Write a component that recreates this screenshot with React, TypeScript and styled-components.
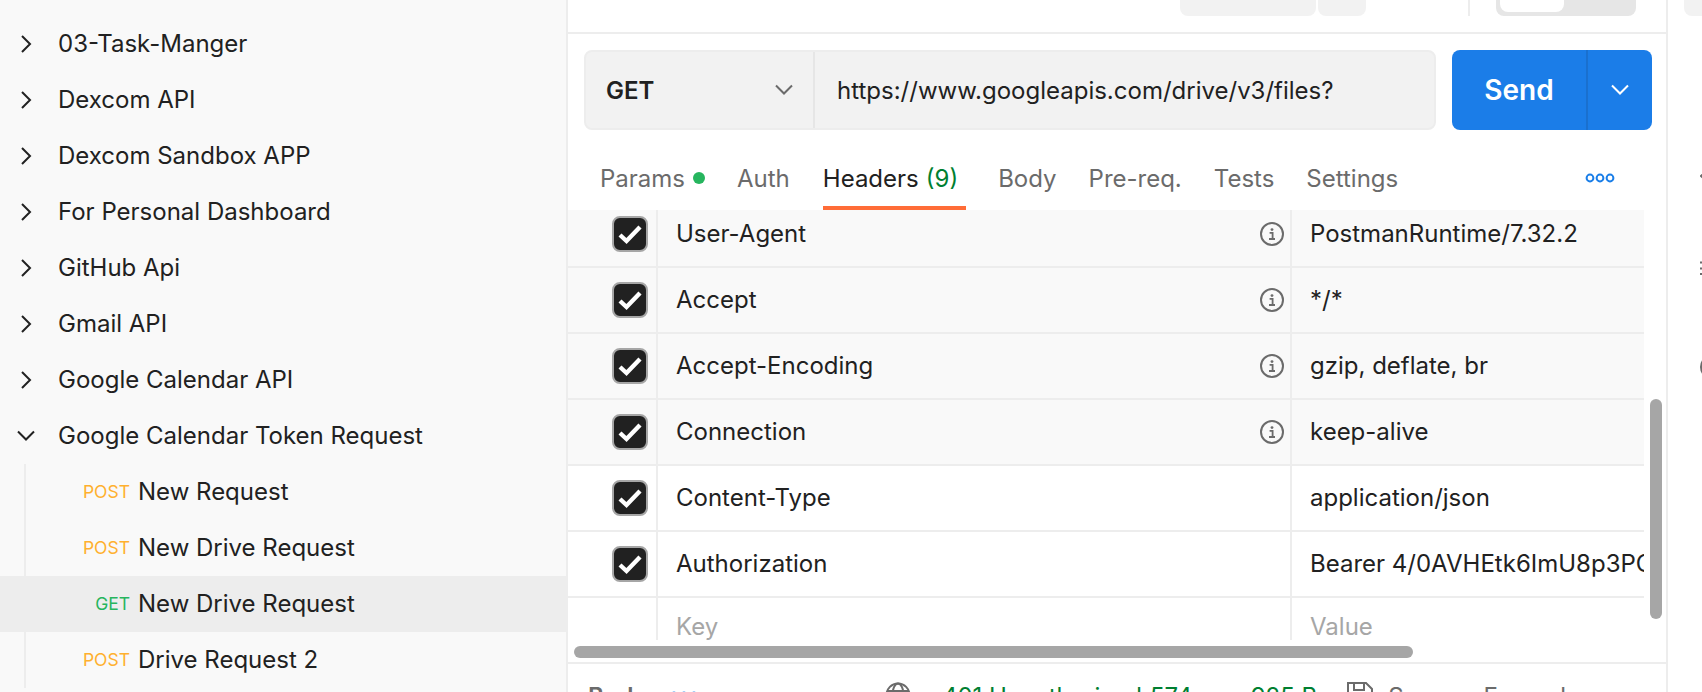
import styled, { createGlobalStyle } from "styled-components"

const folders = [
    "03-Task-Manger",
    "Dexcom API",
    "Dexcom Sandbox APP",
    "For Personal Dashboard",
    "GitHub Api",
    "Gmail API",
    "Google Calendar API",
]

const requests = [
    { method: "POST", name: "New Request" },
    { method: "POST", name: "New Drive Request" },
    { method: "GET", name: "New Drive Request", active: true },
    { method: "POST", name: "Drive Request 2" },
]

const tabs = ["Body", "Pre-req.", "Tests", "Settings"]

const headers = [
    { key: "User-Agent", value: "PostmanRuntime/7.32.2", auto: true },
    { key: "Accept", value: "*/*", auto: true },
    { key: "Accept-Encoding", value: "gzip, deflate, br", auto: true },
    { key: "Connection", value: "keep-alive", auto: true },
    { key: "Content-Type", value: "application/json" },
    { key: "Authorization", value: "Bearer 4/0AVHEtk6ImU8p3PQfKxLm2Zr9" },
]

const ChevronRight = () => (
    <ChevronIcon viewBox="0 0 18 18">
        <polyline points="5,1 13,9 5,17" />
    </ChevronIcon>
)

const ChevronDown = () => (
    <ChevronIcon viewBox="0 0 18 18">
        <polyline points="1,4.5 9,12.5 17,4.5" />
    </ChevronIcon>
)

const InfoIcon = () => (
    <InfoSvg viewBox="0 0 24 24">
        <circle cx="12" cy="12" r="11" fill="none" stroke="#6b6b6b" strokeWidth="2" />
        <circle cx="12" cy="7.6" r="1.4" fill="#6b6b6b" />
        <path d="M9.6 10.8h3v6M9 17h6" fill="none" stroke="#6b6b6b" strokeWidth="1.8" />
    </InfoSvg>
)

const CheckBox = () => (
    <CheckMark>
        <svg width="32" height="32" viewBox="0 0 32 32">
            <polyline points="6,17 12.5,23 26,9" fill="none" stroke="#fff" strokeWidth="4.4" />
        </svg>
    </CheckMark>
)

const MoreDots = () => (
    <svg width="30" height="10" viewBox="0 0 30 10">
        <circle cx="5" cy="5" r="3.4" fill="none" stroke="#1a7ee8" strokeWidth="2" />
        <circle cx="15" cy="5" r="3.4" fill="none" stroke="#1a7ee8" strokeWidth="2" />
        <circle cx="25" cy="5" r="3.4" fill="none" stroke="#1a7ee8" strokeWidth="2" />
    </svg>
)

export default function App() {
    return (
        <>
            <GlobalStyle />
            <Page>
                <Sidebar>
                    {folders.map((name) => (
                        <FolderRow key={name}>
                            <ChevronRight />
                            {name}
                        </FolderRow>
                    ))}
                    <FolderRow>
                        <ChevronDown />
                        Google Calendar Token Request
                    </FolderRow>
                    <RequestGroup>
                        {requests.map((item, i) => (
                            <RequestRow key={i} $active={item.active}>
                                <MethodTag $get={item.method === "GET"}>{item.method}</MethodTag>
                                {item.name}
                            </RequestRow>
                        ))}
                    </RequestGroup>
                </Sidebar>

                <Main>
                    <TopBar>
                        <TopBlock $width={136} />
                        <TopBlock $width={48} />
                        <TopDivider />
                        <ToggleTrack>
                            <ToggleThumb />
                        </ToggleTrack>
                    </TopBar>

                    <UrlRow>
                        <UrlBox>
                            <MethodSelect>
                                GET
                                <SelectChevron viewBox="0 0 18 18">
                                    <polyline points="1,4.5 9,12.5 17,4.5" />
                                </SelectChevron>
                            </MethodSelect>
                            <UrlText>https://www.googleapis.com/drive/v3/files?</UrlText>
                        </UrlBox>
                        <SendButton>
                            <SendLabel>Send</SendLabel>
                            <SendMenu>
                                <SendChevron viewBox="0 0 18 18">
                                    <polyline points="1,4.5 9,12.5 17,4.5" />
                                </SendChevron>
                            </SendMenu>
                        </SendButton>
                    </UrlRow>

                    <TabBar>
                        <Tab>
                            Params
                            <GreenDot />
                        </Tab>
                        <Tab>Auth</Tab>
                        <ActiveTab>
                            Headers
                            <TabCount>(9)</TabCount>
                        </ActiveTab>
                        {tabs.map((tab) => (
                            <Tab key={tab}>{tab}</Tab>
                        ))}
                        <TabMore>
                            <MoreDots />
                        </TabMore>
                    </TabBar>

                    <TableArea>
                        <TableClip>
                            <Table>
                                {headers.map((row) => (
                                    <Row key={row.key} $auto={row.auto}>
                                        <CheckCell>
                                            <CheckBox />
                                        </CheckCell>
                                        <KeyCell>
                                            {row.key}
                                            {row.auto && <InfoIcon />}
                                        </KeyCell>
                                        <ValueCell>{row.value}</ValueCell>
                                    </Row>
                                ))}
                                <PlaceholderRow>
                                    <CheckCell />
                                    <KeyCell>Key</KeyCell>
                                    <ValueCell>Value</ValueCell>
                                </PlaceholderRow>
                            </Table>
                        </TableClip>
                        <ScrollThumbY />
                        <ScrollThumbX />
                    </TableArea>

                    <ResponseBar>
                        <BodyLabel>Body</BodyLabel>
                        <BodyMore>
                            <MoreDots />
                        </BodyMore>
                        <ResponseMeta>
                            <MetaIcon $size={26} viewBox="0 0 26 26">
                                <circle cx="13" cy="13" r="11.5" />
                                <ellipse cx="13" cy="13" rx="5.5" ry="11.5" />
                                <path d="M2 9h22M2 17h22" />
                            </MetaIcon>
                            <StatusText $margin={31}>401 Unauthorized</StatusText>
                            <StatusText $margin={8}>574 ms</StatusText>
                            <StatusText $margin={18}>925 B</StatusText>
                            <MetaIcon $size={28} $margin={29} viewBox="0 0 28 28">
                                <path d="M2 2h18l6 6v18H2z" />
                                <path d="M8 2v7h10V2M7 26v-9h14v9" />
                            </MetaIcon>
                            <SaveText>Save as Example</SaveText>
                        </ResponseMeta>
                    </ResponseBar>
                </Main>

                <Rail>
                    <RailTab />
                    <RailIcon $top={148} viewBox="0 0 24 24">
                        <polyline points="8,6 1,12 8,18" />
                    </RailIcon>
                    <RailIcon $top={68} viewBox="0 0 24 24">
                        <path d="M0 6.5h20M0 12.5h20M0 18h20" />
                    </RailIcon>
                    <RailIcon $top={75} viewBox="0 0 24 24">
                        <circle cx="12" cy="12" r="11" />
                    </RailIcon>
                </Rail>
            </Page>
        </>
    )
}

const GlobalStyle = createGlobalStyle`
    * {
        box-sizing: border-box;
    }
    html, body {
        margin: 0;
        height: 100%;
        overflow: hidden;
        background: #fff;
    }
    body {
        font-family: Inter, "Noto Sans", sans-serif;
        font-size: 24px;
        color: #212121;
    }
`

const Page = styled.div`
    display: flex;
    height: 692px;
    overflow: hidden;
`

const Sidebar = styled.aside`
    width: 568px;
    flex-shrink: 0;
    padding-top: 16px;
    background: #f9f9f9;
    border-right: 2px solid #ededed;
    overflow: hidden;
`

const FolderRow = styled.div`
    display: flex;
    align-items: center;
    height: 56px;
    padding: 0 0 1px 17px;
    white-space: nowrap;
`

const ChevronIcon = styled.svg`
    width: 18px;
    height: 18px;
    margin-right: 23px;
    fill: none;
    stroke: #212121;
    stroke-width: 2;
`

const RequestGroup = styled.div`
    position: relative;
    &::before {
        content: "";
        position: absolute;
        top: 0;
        bottom: 0;
        left: 24px;
        width: 2px;
        background: #ededed;
    }
`

const RequestRow = styled.div<{ $active?: boolean }>`
    display: flex;
    align-items: center;
    height: 56px;
    padding-bottom: 1px;
    background: ${(p) => (p.$active ? "#ededed" : "transparent")};
`

const MethodTag = styled.span<{ $get?: boolean }>`
    width: 130px;
    margin-right: 8px;
    text-align: right;
    font-size: 17.5px;
    color: ${(p) => (p.$get ? "#26b55e" : "#ffb02e")};
`

const Main = styled.main`
    display: flex;
    flex-direction: column;
    width: 1100px;
    flex-shrink: 0;
    border-right: 2px solid #ededed;
    & > * {
        flex-shrink: 0;
    }
`

const TopBar = styled.div`
    display: flex;
    justify-content: flex-end;
    align-items: flex-start;
    gap: 2px;
    height: 34px;
    padding-right: 30px;
    border-bottom: 2px solid #ededed;
`

const TopBlock = styled.div<{ $width: number }>`
    width: ${(p) => p.$width}px;
    height: 16px;
    background: #f2f2f2;
    border-radius: 0 0 8px 8px;
`

const TopDivider = styled.div`
    width: 2px;
    height: 16px;
    margin: 0 24px 0 100px;
    background: #ededed;
`

const ToggleTrack = styled.div`
    width: 140px;
    height: 16px;
    padding: 0 72px 4px 4px;
    background: #e6e6e6;
    border-radius: 0 0 8px 8px;
`

const ToggleThumb = styled.div`
    height: 12px;
    background: #fff;
    border-radius: 0 0 8px 8px;
`

const UrlRow = styled.div`
    display: flex;
    gap: 16px;
    height: 96px;
    padding: 16px 0 0 16px;
`

const UrlBox = styled.div`
    display: flex;
    width: 852px;
    height: 80px;
    background: #f2f2f2;
    border: 2px solid #ededed;
    border-radius: 8px;
`

const MethodSelect = styled.div`
    display: flex;
    align-items: center;
    justify-content: space-between;
    width: 229px;
    padding: 0 20px 0 20px;
    font-weight: 600;
    border-right: 2px solid #e6e6e6;
`

const SelectChevron = styled.svg`
    width: 18px;
    height: 18px;
    fill: none;
    stroke: #6b6b6b;
    stroke-width: 2;
`

const UrlText = styled.div`
    display: flex;
    align-items: center;
    padding-left: 22px;
    white-space: nowrap;
`

const SendButton = styled.div`
    display: flex;
    width: 200px;
    height: 80px;
    color: #fff;
    background: #1b7de8;
    border-radius: 8px;
`

const SendLabel = styled.div`
    display: flex;
    align-items: center;
    justify-content: center;
    width: 136px;
    font-size: 28px;
    font-weight: 600;
    border-right: 2px solid #1a70cf;
`

const SendMenu = styled.div`
    display: flex;
    align-items: center;
    justify-content: center;
    flex: 1;
`

const SendChevron = styled.svg`
    width: 18px;
    height: 18px;
    fill: none;
    stroke: #fff;
    stroke-width: 2;
`

const TabBar = styled.div`
    display: flex;
    gap: 32px;
    height: 80px;
    padding: 0 0 0 32px;
`

const Tab = styled.div`
    display: flex;
    align-items: center;
    height: 80px;
    padding-top: 16px;
    color: #6b6b6b;
    white-space: nowrap;
`

const ActiveTab = styled(Tab)`
    margin-left: 1px;
    padding-top: 20px;
    padding-right: 8px;
    color: #212121;
    border-bottom: 4px solid #ff6c37;
`

const TabCount = styled.span`
    margin-left: 7px;
    color: #007f31;
`

const GreenDot = styled.span`
    width: 12px;
    height: 12px;
    margin-left: 8px;
    background: #26b55e;
    border-radius: 50%;
`

const TabMore = styled.div`
    display: flex;
    align-items: center;
    margin-left: auto;
    padding: 16px 51px 0 0;
`

const TableArea = styled.div`
    position: relative;
    height: 452px;
`

const TableClip = styled.div`
    width: 1076px;
    height: 430px;
    overflow: hidden;
`

const Table = styled.div`
    margin-top: -8px;
`

const Row = styled.div<{ $auto?: boolean }>`
    display: grid;
    grid-template-columns: 90px 634px 1fr;
    height: 66px;
    background: ${(p) => (p.$auto ? "#f9f9f9" : "#fff")};
    border-bottom: 2px solid #ededed;
`

const CheckCell = styled.div`
    display: flex;
    align-items: center;
    justify-content: flex-end;
    padding-right: 8px;
    border-right: 2px solid #ededed;
`

const CheckMark = styled.div`
    display: flex;
    align-items: center;
    justify-content: center;
    width: 36px;
    height: 36px;
    background: #212121;
    border: 2px solid #a6a6a6;
    border-radius: 8px;
`

const KeyCell = styled.div`
    display: flex;
    align-items: center;
    justify-content: space-between;
    padding: 0 6px 1px 18px;
    border-right: 2px solid #ededed;
`

const InfoSvg = styled.svg`
    width: 24px;
    height: 24px;
`

const ValueCell = styled.div`
    display: flex;
    align-items: center;
    padding: 0 0 1px 18px;
    white-space: nowrap;
    overflow: hidden;
`

const PlaceholderRow = styled.div`
    display: grid;
    grid-template-columns: 90px 634px 1fr;
    height: 58px;
    color: #a6a6a6;
`

const ScrollThumbY = styled.div`
    position: absolute;
    top: 189px;
    right: 4px;
    width: 12px;
    height: 220px;
    background: #a6a6a6;
    border-radius: 6px;
`

const ScrollThumbX = styled.div`
    position: absolute;
    left: 6px;
    top: 436px;
    width: 839px;
    height: 12px;
    background: #a6a6a6;
    border-radius: 6px;
`

const ResponseBar = styled.div`
    display: flex;
    align-items: center;
    height: 68px;
    padding: 0 86px 2px 20px;
    border-top: 2px solid #ededed;
`

const BodyLabel = styled.span`
    font-weight: 600;
    color: #6b6b6b;
`

const BodyMore = styled.span`
    display: flex;
    margin-left: 21px;
`

const ResponseMeta = styled.div`
    display: flex;
    align-items: center;
    margin-left: auto;
`

const MetaIcon = styled.svg<{ $size: number; $margin?: number }>`
    width: ${(p) => p.$size}px;
    height: ${(p) => p.$size}px;
    margin-left: ${(p) => p.$margin ?? 0}px;
    margin-bottom: 2px;
    fill: none;
    stroke: #6b6b6b;
    stroke-width: 2;
`

const StatusText = styled.span<{ $margin: number }>`
    margin-left: ${(p) => p.$margin}px;
    color: #007f31;
    white-space: nowrap;
`

const SaveText = styled.span`
    margin-left: 14px;
    color: #6b6b6b;
    white-space: nowrap;
`

const Rail = styled.div`
    display: flex;
    flex-direction: column;
    flex: 1;
    overflow: hidden;
`

const RailTab = styled.div`
    width: 18px;
    height: 16px;
    margin-left: 16px;
    background: #f2f2f2;
    border-radius: 0 0 0 8px;
`

const RailIcon = styled.svg<{ $top: number }>`
    flex-shrink: 0;
    width: 24px;
    height: 24px;
    margin: ${(p) => p.$top}px 0 0 32px;
    fill: none;
    stroke: #6b6b6b;
    stroke-width: 2;
`
